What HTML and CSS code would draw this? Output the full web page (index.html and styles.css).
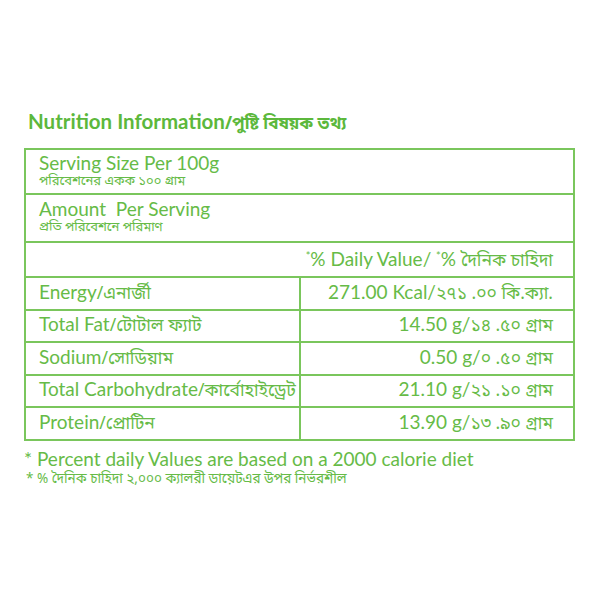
FILE: index.html
```html
<!DOCTYPE html>
<html>
<head>
<meta charset="utf-8">
<link rel="stylesheet" href="styles.css">
</head>
<body>
<div class="wrap">
  <h1 class="title">Nutrition Information<span class="bn">/পুষ্টি বিষয়ক তথ্য</span></h1>
  <table class="nt">
    <tr class="r-serv"><td colspan="2"><div class="en">Serving Size Per 100g</div><div class="bn sub">পরিবেশনের একক ১০০ গ্রাম</div></td></tr>
    <tr class="r-amt"><td colspan="2"><div class="en">Amount&nbsp; Per Serving</div><div class="bn sub">প্রতি পরিবেশনে পরিমাণ</div></td></tr>
    <tr class="r-dv"><td colspan="2" class="right"><sup>*</sup>% Daily Value/ <sup>*</sup>% <span class="bn">দৈনিক চাহিদা</span></td></tr>
    <tr class="r"><td class="name">Energy<span class="bn">/এনার্জী</span></td><td class="val">271.00 Kcal/<span class="bn">২৭১ .০০ কি.ক্যা.</span></td></tr>
    <tr class="r"><td class="name">Total Fat<span class="bn">/টোটাল ফ্যাট</span></td><td class="val">14.50 g/<span class="bn">১৪ .৫০ গ্রাম</span></td></tr>
    <tr class="r"><td class="name">Sodium<span class="bn">/সোডিয়াম</span></td><td class="val">0.50 g/<span class="bn">০ .৫০ গ্রাম</span></td></tr>
    <tr class="r"><td class="name">Total Carbohydrate<span class="bn">/কার্বোহাইড্রেট</span></td><td class="val">21.10 g/<span class="bn">২১ .১০ গ্রাম</span></td></tr>
    <tr class="r"><td class="name">Protein<span class="bn">/প্রোটিন</span></td><td class="val">13.90 g/<span class="bn">১৩ .৯০ গ্রাম</span></td></tr>
  </table>
  <p class="foot">* Percent daily Values are based on a 2000 calorie diet</p>
  <p class="foot-bn bn">* % দৈনিক চাহিদা ২,০০০ ক্যালরী ডায়েটএর উপর নির্ভরশীল</p>
</div>
</body>
</html>
```
FILE: styles.css
```css
html, body {
  margin: 0;
  padding: 0;
  background: #ffffff;
}
body {
  font-family: "Lato", "Noto Sans Bengali", "Noto Sans", sans-serif;
  color: #66bb47;
}
.bn {
  font-family: "Noto Sans Bengali", "Lohit Bengali", "Noto Sans", sans-serif;
  font-size: 0.92em;
}
.wrap {
  padding: 110px 25px 0 24px;
}
.title {
  margin: 0 0 12px 4px;
  font-size: 20.5px;
  font-weight: 700;
  line-height: 22px;
  color: #5cb83c;
}
.title .bn { font-size: 17px; font-weight: 700; }
.nt {
  width: 551px;
  border-collapse: collapse;
  border: 2px solid #7ac65c;
}
.nt td {
  border: 2px solid #7ac65c;
  padding: 0 0 0 13px;
  font-size: 19px;
  line-height: 22px;
  vertical-align: middle;
}
.r-serv td { height: 42px; padding-bottom: 1px; }
.r-amt td { height: 45px; padding-bottom: 1px; }
.r-dv td { height: 32px; padding-top: 1px; }
.r td { height: 30.5px; }
.en { line-height: 21px; }
.sub { font-size: 13px; line-height: 18px; }
.right { text-align: right; padding-right: 20px !important; }
.right sup { font-size: 11px; vertical-align: 6px; line-height: 0; }
.name { width: 260px; }
.val { text-align: right; padding-right: 20px !important; }
.foot {
  margin: 7px 0 0 0;
  font-size: 19px;
  line-height: 22px;
}
.foot-bn {
  margin: 0;
  font-size: 13.5px;
  line-height: 20px;
  padding-left: 2px;
}
```
